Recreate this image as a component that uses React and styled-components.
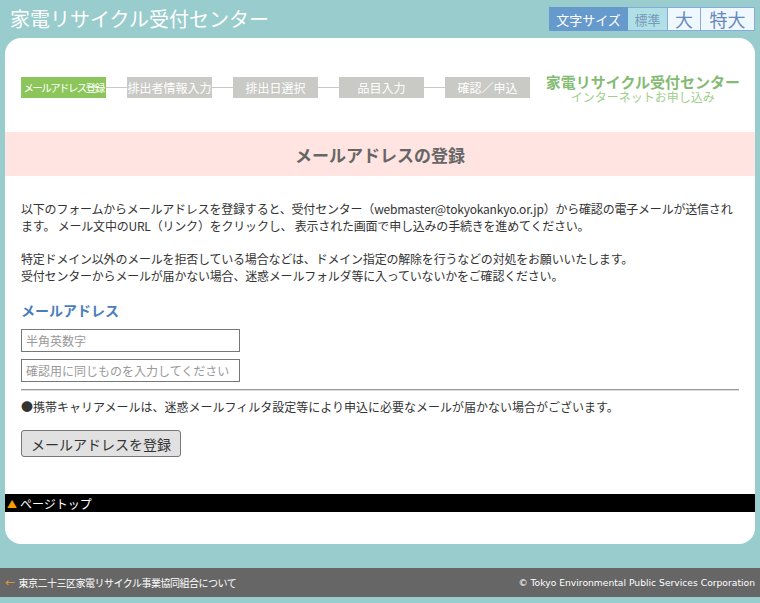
import React from 'react';
import styled, { createGlobalStyle } from 'styled-components';

const GlobalStyle = createGlobalStyle`
  html, body {
    margin: 0;
    padding: 0;
    background: #99cccc;
    font-family: "Noto Sans CJK JP", "Noto Sans", sans-serif;
  }
`;

const steps = ['メールアドレス登録', '排出者情報入力', '排出日選択', '品目入力', '確認／申込'];

export default function App() {
  return (
    <Page>
      <GlobalStyle />
      <Header>
        <SiteTitle>家電リサイクル受付センター</SiteTitle>
        <SizeSwitch>
          <SizeLabel>文字サイズ</SizeLabel>
          <SizeBtn active>標準</SizeBtn>
          <SizeBtn big>大</SizeBtn>
          <SizeBtn big wide>特大</SizeBtn>
        </SizeSwitch>
      </Header>

      <Panel>
        <StepsRow>
          <Steps>
            {steps.map((s, i) => (
              <React.Fragment key={s}>
                {i > 0 && <Line />}
                <Step current={i === 0} tight={s.length > 7}>{s}</Step>
              </React.Fragment>
            ))}
          </Steps>
          <Brand>
            <BrandMain>家電リサイクル受付センター</BrandMain>
            <BrandSub>インターネットお申し込み</BrandSub>
          </Brand>
        </StepsRow>

        <TitleBand>メールアドレスの登録</TitleBand>

        <Content>
          <Para>
            以下のフォームからメールアドレスを登録すると、受付センター（webmaster@tokyokankyo.or.jp）から確認の電子メールが送信されます。
            メール文中のURL（リンク）をクリックし、 表示された画面で申し込みの手続きを進めてください。
          </Para>
          <Para>
            特定ドメイン以外のメールを拒否している場合などは、ドメイン指定の解除を行うなどの対処をお願いいたします。<br />
            受付センターからメールが届かない場合、迷惑メールフォルダ等に入っていないかをご確認ください。
          </Para>

          <FieldLabel>メールアドレス</FieldLabel>
          <Input placeholder="半角英数字" first />
          <Input placeholder="確認用に同じものを入力してください" />
          <Rule />
          <Note>●携帯キャリアメールは、迷惑メールフィルタ設定等により申込に必要なメールが届かない場合がございます。</Note>
          <Submit>メールアドレスを登録</Submit>
        </Content>

        <PageTop>
          <Tri>▲</Tri>ページトップ
        </PageTop>
      </Panel>

      <Footer>
        <FootLink>
          <Arrow>←</Arrow>東京二十三区家電リサイクル事業協同組合について
        </FootLink>
        <Copy>© Tokyo Environmental Public Services Corporation</Copy>
      </Footer>
    </Page>
  );
}

const Page = styled.div`
  width: 760px;
  height: 603px;
  overflow: hidden;
  background: #99cccc;
`;

const Header = styled.div`
  height: 38px;
  display: flex;
  align-items: center;
  justify-content: space-between;
  padding: 0 5px 0 10px;
  box-sizing: border-box;
`;

const SiteTitle = styled.div`
  color: #fff;
  font-size: 20px;
  line-height: 1;
  margin-top: -1px;
`;

const SizeSwitch = styled.div`
  display: flex;
  height: 24px;
`;

const SizeLabel = styled.div`
  background: #6699cc;
  color: #fff;
  font-size: 13px;
  width: 79px;
  display: flex;
  align-items: center;
  justify-content: center;
`;

const SizeBtn = styled.div`
  box-sizing: border-box;
  border: 1px solid #88aadd;
  border-left: none;
  background: ${p => (p.active ? '#b0e0e6' : '#f0f8ff')};
  color: ${p => (p.active ? '#7799bb' : '#6688bb')};
  font-size: ${p => (p.big ? '18px' : '13px')};
  width: ${p => (p.wide ? '54px' : p.big ? '33px' : '40px')};
  display: flex;
  align-items: center;
  justify-content: center;
`;

const Panel = styled.div`
  margin: 0 5px;
  height: 506px;
  background: #fff;
  border-radius: 16px;
  padding-top: 39px;
  box-sizing: border-box;
  display: flex;
  flex-direction: column;
`;

const StepsRow = styled.div`
  display: flex;
  align-items: flex-start;
  padding: 0 15px 0 16px;
  justify-content: space-between;
`;

const Steps = styled.div`
  display: flex;
  align-items: center;
  height: 21px;
`;

const Step = styled.div`
  width: 85px;
  height: 21px;
  background: ${p => (p.current ? '#8cc65a' : '#c9c9c5')};
  color: #fff;
  font-size: ${p => (p.tight ? '10.5px' : '12px')};
  letter-spacing: ${p => (p.tight ? '-1.6px' : '0')};
  display: flex;
  align-items: center;
  justify-content: center;
  white-space: nowrap;
  overflow: hidden;
`;

const Line = styled.div`
  width: 21px;
  height: 1px;
  background: #c9c9c5;
`;

const Brand = styled.div`
  display: flex;
  flex-direction: column;
  align-items: center;
  margin-top: -4px;
`;

const BrandMain = styled.div`
  color: #84bb72;
  font-size: 15px;
  font-weight: bold;
  line-height: 17px;
`;

const BrandSub = styled.div`
  color: #9fcf8c;
  font-size: 12px;
  line-height: 13px;
`;

const TitleBand = styled.div`
  margin-top: 29px;
  height: 44px;
  background: #ffe4e1;
  color: #666;
  font-size: 17px;
  font-weight: bold;
  display: flex;
  align-items: center;
  justify-content: center;
`;

const Content = styled.div`
  padding: 24px 16px 0 16px;
  flex: 1;
`;

const Para = styled.p`
  margin: 0 0 16px;
  font-size: 12px;
  letter-spacing: -0.2px;
  line-height: 17px;
  color: #333;
`;

const FieldLabel = styled.div`
  margin-top: 17px;
  color: #4a7ebb;
  font-size: 14px;
  font-weight: bold;
  line-height: 18px;
`;

const Input = styled.input`
  display: block;
  box-sizing: border-box;
  width: 219px;
  height: 23px;
  margin-top: ${p => (p.first ? '10px' : '7px')};
  border: 1px solid #777;
  outline: none;
  font-size: 12px;
  padding: 0 4px;
  font-family: inherit;
  &::placeholder {
    color: #999;
  }
`;

const Rule = styled.div`
  margin-top: 7px;
  height: 1px;
  background: #999;
  border-bottom: 1px solid #ddd;
`;

const Note = styled.div`
  margin-top: 7px;
  font-size: 12px;
  line-height: 17px;
  color: #333;
`;

const Submit = styled.button`
  margin-top: 15px;
  height: 27px;
  padding: 0 9px;
  font-family: inherit;
  font-size: 14px;
  color: #333;
  background: #e1e1e1;
  border: 1px solid #777;
  border-radius: 3px;
`;

const PageTop = styled.div`
  height: 18px;
  margin-bottom: 32px;
  background: #000;
  color: #fff;
  font-size: 12px;
  display: flex;
  align-items: center;
`;

const Tri = styled.span`
  color: #f5a000;
  font-size: 10px;
  margin: 0 3px 0 2px;
`;

const Footer = styled.div`
  margin-top: 24px;
  height: 29px;
  background: #666;
  color: #fff;
  display: flex;
  align-items: center;
  justify-content: space-between;
  padding: 0 5px 0 5px;
`;

const FootLink = styled.div`
  display: flex;
  align-items: center;
  font-size: 10px;
  letter-spacing: -0.5px;
`;

const Arrow = styled.span`
  color: #f0a030;
  margin-right: 4px;
  font-size: 10px;
`;

const Copy = styled.div`
  font-family: "DejaVu Sans", sans-serif;
  font-size: 9.2px;
`;
